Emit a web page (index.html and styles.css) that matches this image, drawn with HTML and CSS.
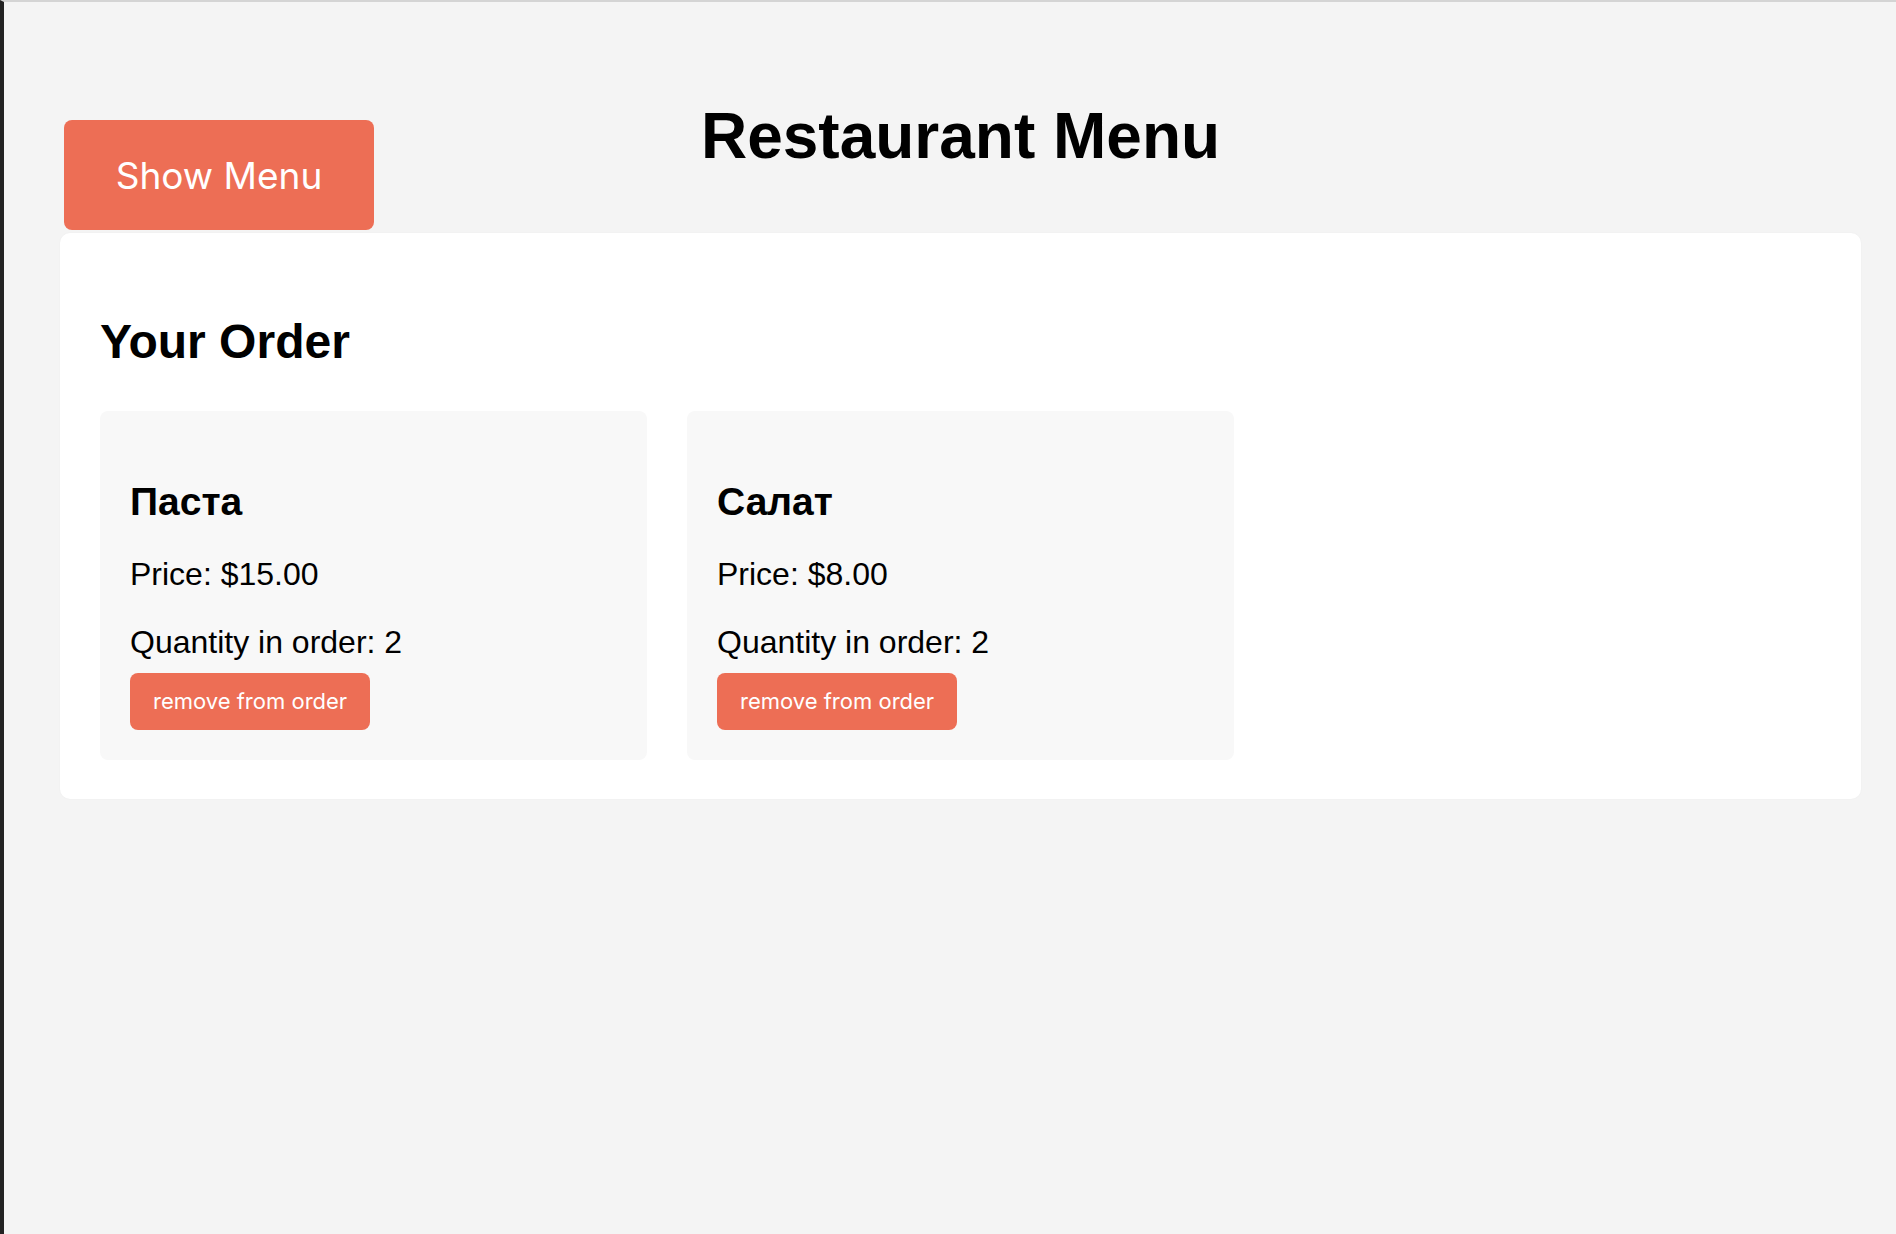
FILE: index.html
```html
<!DOCTYPE html>
<html lang="en">
<head>
<meta charset="utf-8">
<title>Restaurant Menu</title>
<link rel="stylesheet" href="styles.css">
</head>
<body>
<div class="page">
  <div class="app">
    <header class="header">
      <button class="show-btn" type="button">Show Menu</button>
      <h1 class="title">Restaurant Menu</h1>
      <div class="spacer"></div>
    </header>
    <section class="order">
      <h2 class="order-title">Your Order</h2>
      <div class="order-grid">
        <div class="item">
          <h3 class="item-name">Паста</h3>
          <p class="item-line">Price: $15.00</p>
          <p class="item-line item-qty">Quantity in order: 2</p>
          <button class="remove-btn" type="button">remove from order</button>
        </div>
        <div class="item">
          <h3 class="item-name">Салат</h3>
          <p class="item-line">Price: $8.00</p>
          <p class="item-line item-qty">Quantity in order: 2</p>
          <button class="remove-btn" type="button">remove from order</button>
        </div>
      </div>
    </section>
  </div>
</div>
</body>
</html>
```

FILE: styles.css
```css
html, body {
  margin: 0;
  padding: 0;
  height: 100%;
}

body {
  background: #f4f4f4;
  font-family: "Liberation Sans", Arial, sans-serif;
  color: #000;
}

.page {
  min-height: 100%;
  box-sizing: border-box;
  border-top: 2px solid #d4d4d4;
  border-left: 4px solid #222222;
}

.app {
  margin-left: 56px;
  width: 1801px;
}

.header {
  display: grid;
  grid-template-columns: 1fr auto 1fr;
  align-items: start;
  padding-top: 98px;
}

.show-btn {
  justify-self: start;
  margin: 20px 0 0 4px;
  width: 310px;
  height: 110px;
  border: none;
  border-radius: 8px;
  background: #ed6e55;
  color: #fff;
  font-family: Inter, "Noto Sans", sans-serif;
  font-size: 37px;
  font-weight: 400;
  padding: 0;
  cursor: pointer;
}

.title {
  margin: 0;
  font-size: 64px;
  font-weight: 700;
  line-height: 1.15;
  white-space: nowrap;
}

.order {
  margin-top: 3px;
  background: #fff;
  border-radius: 10px;
  padding: 40px 40px 39px 40px;
  box-shadow: 0 0 2px rgba(0, 0, 0, 0.04);
}

.order-title {
  margin: 0 0 42px 0;
  padding-top: 41px;
  font-size: 48px;
  font-weight: 700;
  line-height: 1.15;
}

.order-grid {
  display: grid;
  grid-template-columns: repeat(3, 1fr);
  gap: 40px;
}

.item {
  background: #f8f8f8;
  border-radius: 8px;
  padding: 30px 30px 30px 30px;
}

.item-name {
  margin: 39px 0 31px 0;
  font-size: 39px;
  font-weight: 700;
  line-height: 1.15;
}

.item-line {
  margin: 0 0 31px 0;
  font-size: 32px;
  line-height: 1.15;
}

.item-qty {
  margin-bottom: 12px;
}

.remove-btn {
  display: block;
  height: 57px;
  padding: 0 23px;
  border: none;
  border-radius: 8px;
  background: #ed6e55;
  color: #fff;
  font-family: Inter, "Noto Sans", sans-serif;
  font-size: 22px;
  cursor: pointer;
}
```
